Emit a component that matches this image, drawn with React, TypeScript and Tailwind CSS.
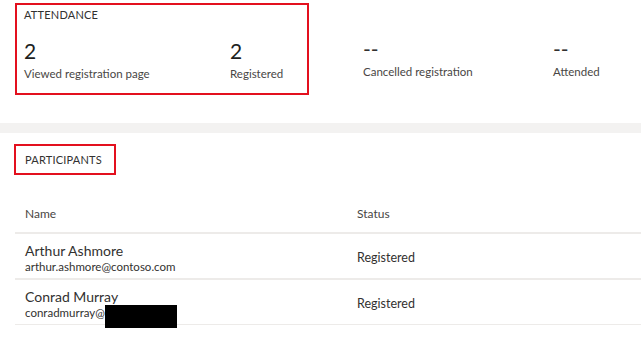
const stats = [
    { value: "--", label: "Cancelled registration", width: "w-[190px]" },
    { value: "--", label: "Attended", width: "w-[80px]" },
];

const people = [
    { name: "Arthur Ashmore", email: "arthur.ashmore@contoso.com", status: "Registered", hidden: false },
    { name: "Conrad Murray", email: "conradmurray@", status: "Registered", hidden: true },
];

const Stat = ({ value, label, width, dim }: { value: string; label: string; width: string; dim?: boolean }) => (
    <div className={`flex flex-col shrink-0 whitespace-nowrap ${width}`}>
        <span className={`text-[21px] leading-[24px] h-[24px] ${dim ? "text-[#323130]" : "text-[#201f1e]"}`}>{value}</span>
        <span className="text-[11.5px] leading-[16px] text-[#484644] mt-[3px]">{label}</span>
    </div>
);

const App = () => {
    return (
        <div className="w-[641px] h-[339px] bg-white overflow-hidden font-['Lato','Noto_Sans',sans-serif]">

            {/* attendance */}
            <div className="h-[123px] flex items-start">
                <div className="mt-[3px] ml-[15px] w-[294px] h-[92px] shrink-0 border-2 border-[#e3101e] pl-[7px] pt-[3px]">
                    <div className="text-[11px] leading-[14px] text-[#323130] tracking-[0.2px]">ATTENDANCE</div>
                    <div className="flex mt-[17px]">
                        <Stat value="2" label="Viewed registration page" width="w-[206px]" />
                        <Stat value="2" label="Registered" width="w-[70px]" />
                    </div>
                </div>
                <div className="flex mt-[37px] ml-[54px]">
                    {stats.map((s) => (
                        <Stat key={s.label} value={s.value} label={s.label} width={s.width} dim />
                    ))}
                </div>
            </div>

            <div className="h-[10px] bg-[#f3f2f1]" />

            {/* participants */}
            <div className="pt-[11px]">
                <div className="ml-[14px] w-[102px] h-[31px] border-2 border-[#e3101e] pl-[9px] flex items-center">
                    <span className="text-[11px] leading-[14px] text-[#323130] tracking-[0.2px]">PARTICIPANTS</span>
                </div>

                <div className="ml-[15px] mt-[20px]">
                    <div className="flex h-[37px] items-center text-[12px] text-[#484644]">
                        <span className="w-[342px] pl-[10px]">Name</span>
                        <span>Status</span>
                    </div>
                    {people.map((p) => (
                        <div key={p.name} className="flex h-[46px] items-center pt-[3px] border-t-2 border-[#edebe9]">
                            <div className="w-[342px] pl-[10px] flex flex-col">
                                <span className="text-[14px] leading-[17px] text-[#323130]">{p.name}</span>
                                <span className="text-[11.5px] leading-[15px] text-[#323130] flex items-center">
                                    {p.email}
                                    {p.hidden && <span className="inline-block w-[72px] h-[23px] bg-black -mb-[8px]" />}
                                </span>
                            </div>
                            <span className="text-[12.5px] text-[#323130] pt-[2px]">{p.status}</span>
                        </div>
                    ))}
                    <div className="border-t border-[#edebe9]" />
                </div>
            </div>
        </div>
    );
};

export default App;
